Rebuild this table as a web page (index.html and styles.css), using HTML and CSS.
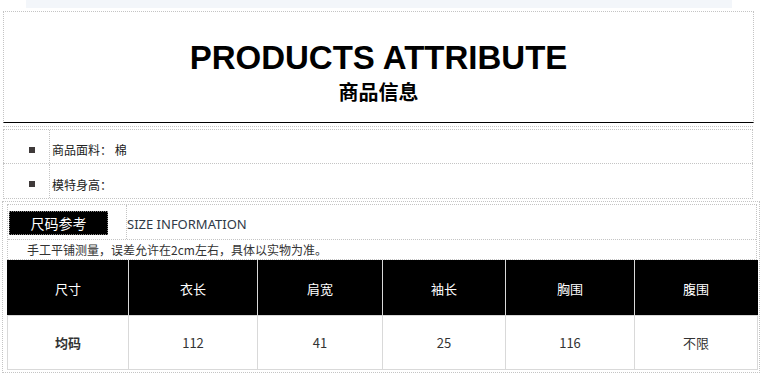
FILE: index.html
```html
<!DOCTYPE html>
<html>
<head>
<meta charset="utf-8">
<link rel="stylesheet" href="styles.css">
</head>
<body>
<div class="topstrip"></div>
<div class="header">
  <div class="title-en">PRODUCTS ATTRIBUTE</div>
  <div class="title-cn">商品信息</div>
</div>
<div class="attrs">
  <div class="attr-row">
    <div class="bullet-cell"><span class="bullet"></span></div>
    <div class="attr-text">商品面料：&nbsp;棉</div>
  </div>
  <div class="attr-row">
    <div class="bullet-cell"><span class="bullet"></span></div>
    <div class="attr-text">模特身高：</div>
  </div>
</div>
<div class="size-section">
  <div class="size-head">
    <div class="size-row">
      <div class="tag-cell"><span class="tag">尺码参考</span></div>
      <div class="size-title">SIZE INFORMATION</div>
    </div>
    <div class="note">手工平铺测量，误差允许在2cm左右，具体以实物为准。</div>
  </div>
  <table class="size-table">
    <colgroup>
      <col class="c1"><col class="c2"><col class="c3"><col class="c4"><col class="c5"><col class="c6">
    </colgroup>
    <tr class="thead">
      <td>尺寸</td><td>衣长</td><td>肩宽</td><td>袖长</td><td>胸围</td><td>腹围</td>
    </tr>
    <tr class="tbody">
      <td class="bold">均码</td><td>112</td><td>41</td><td>25</td><td>116</td><td>不限</td>
    </tr>
  </table>
</div>
</body>
</html>
```

FILE: styles.css
```css
html, body {
  margin: 0;
  padding: 0;
  background: #fff;
  font-family: "Noto Sans", "Noto Sans CJK SC", sans-serif;
  color: #333;
}

.topstrip {
  margin-left: 26px;
  width: 706px;
  height: 8px;
  background: #f3f6fa;
}

.header {
  margin: 3px 0 0 3px;
  width: 751px;
  height: 112px;
  border: 1px dotted #c4c4c4;
  border-bottom: 1px solid #000;
  display: flex;
  flex-direction: column;
  align-items: center;
  box-sizing: border-box;
  padding-top: 29px;
}

.title-en {
  font-family: "Liberation Sans", Arial, sans-serif;
  font-weight: bold;
  font-size: 33px;
  line-height: 34px;
  color: #000;
}

.title-cn {
  font-family: "Noto Sans CJK SC", sans-serif;
  font-weight: bold;
  font-size: 20px;
  line-height: 24px;
  color: #000;
  margin-top: 5px;
}

.attrs {
  margin: 3px 0 0 3px;
  width: 750px;
  border-top: 1px dotted #c4c4c4;
  padding-top: 2px;
  box-sizing: border-box;
}

.attr-row {
  display: flex;
  height: 34px;
  border: 1px dotted #c4c4c4;
  border-bottom: none;
  box-sizing: border-box;
}

.attr-row:last-child {
  border-bottom: 1px dotted #c4c4c4;
  height: 36px;
}

.bullet-cell {
  width: 46px;
  border-right: 1px dotted #c4c4c4;
  display: flex;
  align-items: center;
  justify-content: flex-end;
  padding: 6px 14px 0 0;
  box-sizing: border-box;
}

.bullet {
  display: block;
  width: 6px;
  height: 6px;
  background: #3f3a3a;
}

.attr-text {
  font-family: "Noto Sans CJK SC", sans-serif;
  font-size: 12px;
  color: #222;
  display: flex;
  align-items: center;
  padding: 6px 0 0 2px;
  box-sizing: border-box;
}

.size-section {
  margin: 2px 0 0 2px;
  width: 758px;
  height: 172px;
  border: 1px dotted #c4c4c4;
  box-sizing: border-box;
  padding: 2px 2px 0 4px;
}

.size-head {
  border: 1px dotted #c4c4c4;
  box-sizing: border-box;
  width: 750px;
}

.size-row {
  display: flex;
  height: 34px;
  border-bottom: 1px dotted #c4c4c4;
}

.tag-cell {
  width: 119px;
  border-right: 1px dotted #c4c4c4;
  display: flex;
  align-items: center;
  padding-left: 1px;
  box-sizing: border-box;
}

.tag {
  display: flex;
  align-items: center;
  justify-content: center;
  width: 99px;
  height: 24px;
  background: #000;
  border: 1px dotted #888;
  box-sizing: border-box;
  color: #fff;
  font-family: "Noto Sans CJK SC", sans-serif;
  font-size: 14px;
  margin-top: 2px;
}

.size-title {
  font-family: "Noto Sans", "Liberation Sans", sans-serif;
  font-size: 13px;
  color: #2f3a48;
  display: flex;
  align-items: center;
  padding-top: 4px;
}

.note {
  font-family: "Noto Sans CJK SC", sans-serif;
  font-size: 12px;
  color: #333;
  height: 19px;
  line-height: 19px;
  padding-left: 19px;
}

.size-table {
  width: 750px;
  border-collapse: collapse;
  table-layout: fixed;
  margin-top: 0;
}

.c1 { width: 121px; }
.c2 { width: 129px; }
.c3 { width: 125px; }
.c4 { width: 123px; }
.c5 { width: 129px; }
.c6 { width: 123px; }

.size-table td {
  text-align: center;
  font-family: "Noto Sans CJK SC", sans-serif;
  font-size: 13px;
  border: 1px solid #d9d9d9;
  padding: 0;
}

.thead td {
  background: #000;
  color: #fff;
  height: 54px;
  border-top-color: #000;
}

.thead td:first-child {
  border-left-color: #000;
}

.thead td:last-child {
  border-right-color: #000;
}

.tbody td {
  height: 53px;
  color: #333;
}

.tbody td.bold {
  font-weight: bold;
}
```
